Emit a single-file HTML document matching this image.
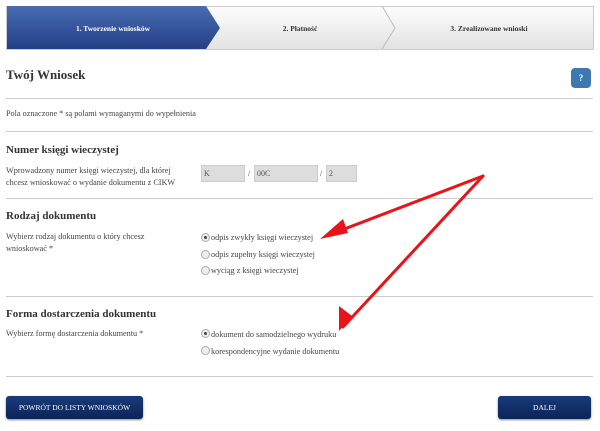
<!DOCTYPE html>
<html><head><meta charset="utf-8"><style>
body{margin:0;width:600px;height:431px;background:#fff;font-family:"Liberation Serif",serif;color:#333;position:relative;overflow:hidden}
.a{position:absolute}
.hr{position:absolute;left:6px;width:587px;height:1px;background:#ccc}
h2{position:absolute;margin:0;font-size:11px;font-weight:bold;color:#333}
.s{font-size:8.2px;color:#444;position:absolute;line-height:12px}
.inp{position:absolute;top:165px;height:17px;background:#ddd;border:1px solid #ccc;box-sizing:border-box;font-size:8px;line-height:15px;padding-left:2px;color:#555}
.r{position:absolute;width:7px;height:7px;border-radius:50%;border:1px solid #aaa;background:#eee}
.r.on::after{content:"";position:absolute;left:2px;top:2px;width:3px;height:3px;border-radius:50%;background:#444}
.btn{position:absolute;top:396px;height:23px;background:linear-gradient(#1a3a7a,#0b2558);color:#fff;font-size:7.5px;text-align:center;line-height:23px;border-radius:3px;box-shadow:0 1px 2px #888}
</style></head><body>
<svg class="a" style="left:0;top:0" width="600" height="52">
<defs><linearGradient id="g" x1="0" y1="0" x2="0" y2="1"><stop offset="0" stop-color="#fdfdfd"/><stop offset="1" stop-color="#e2e2e2"/></linearGradient>
<linearGradient id="b" x1="0" y1="0" x2="0" y2="1"><stop offset="0" stop-color="#4a6cb2"/><stop offset="1" stop-color="#233f86"/></linearGradient></defs>
<rect x="6.5" y="6.5" width="587" height="43" fill="url(#g)" stroke="#ccc"/>
<polygon points="7,6 206,6 220,28 206,49 7,49" fill="url(#b)"/>
<polyline points="382,6 395,28 382,49" fill="none" stroke="#bbb"/>
<text x="113" y="31" font-size="7.5" font-weight="bold" fill="#fff" text-anchor="middle" font-family="Liberation Serif">1. Tworzenie wniosków</text>
<text x="300" y="31" font-size="7.5" font-weight="bold" fill="#333" text-anchor="middle" font-family="Liberation Serif">2. Płatność</text>
<text x="489" y="31" font-size="7.5" font-weight="bold" fill="#333" text-anchor="middle" font-family="Liberation Serif">3. Zrealizowane wnioski</text>
</svg>
<div class="a" style="left:6px;top:67px;font-size:13px;font-weight:bold;color:#333">Twój Wniosek</div>
<div class="a" style="left:571px;top:68px;width:20px;height:20px;border-radius:4px;background:#3d78b2;color:#fff;font-size:9px;font-weight:bold;text-align:center;line-height:20px">?</div>
<div class="hr" style="top:98px"></div>
<div class="s" style="left:6px;top:108px">Pola oznaczone * są polami wymaganymi do wypełnienia</div>
<div class="hr" style="top:131px"></div>
<h2 style="left:6px;top:144px">Numer księgi wieczystej</h2>
<div class="s" style="left:6px;top:165px">Wprowadzony numer księgi wieczystej, dla której<br>chcesz wnioskować o wydanie dokumentu z CIKW</div>
<div class="inp" style="left:201px;width:44px">K</div>
<div class="s" style="left:248px;top:168px">/</div>
<div class="inp" style="left:254px;width:64px">00C</div>
<div class="s" style="left:320px;top:168px">/</div>
<div class="inp" style="left:326px;width:31px">2</div>
<div class="hr" style="top:198px"></div>
<h2 style="left:6px;top:210px">Rodzaj dokumentu</h2>
<div class="s" style="left:6px;top:231px">Wybierz rodzaj dokumentu o który chcesz<br>wnioskować *</div>
<div class="r on" style="left:201px;top:233px"></div><div class="s" style="left:211px;top:232px">odpis zwykły księgi wieczystej</div>
<div class="r" style="left:201px;top:250px"></div><div class="s" style="left:211px;top:249px">odpis zupełny księgi wieczystej</div>
<div class="r" style="left:201px;top:266px"></div><div class="s" style="left:211px;top:265px">wyciąg z księgi wieczystej</div>
<div class="hr" style="top:296px"></div>
<h2 style="left:6px;top:308px">Forma dostarczenia dokumentu</h2>
<div class="s" style="left:6px;top:328px">Wybierz formę dostarczenia dokumentu *</div>
<div class="r on" style="left:201px;top:329px"></div><div class="s" style="left:211px;top:329px">dokument do samodzielnego wydruku</div>
<div class="r" style="left:201px;top:346px"></div><div class="s" style="left:211px;top:346px">korespondencyjne wydanie dokumentu</div>
<div class="hr" style="top:376px"></div>
<div class="btn" style="left:6px;width:137px">POWRÓT DO LISTY WNIOSKÓW</div>
<div class="btn" style="left:498px;width:93px">DALEJ</div>
<svg class="a" style="left:0;top:0" width="600" height="431">
<g stroke="#e8141a" stroke-width="3" fill="none" stroke-linecap="round">
<polyline points="483,176 326,236"/>
<polyline points="483,176 343,327"/>
</g>
<polygon points="320,239 343,219 348,233" fill="#e8141a"/>
<polygon points="339,331 339,306 352,316" fill="#e8141a"/>
</svg>
</body></html>
